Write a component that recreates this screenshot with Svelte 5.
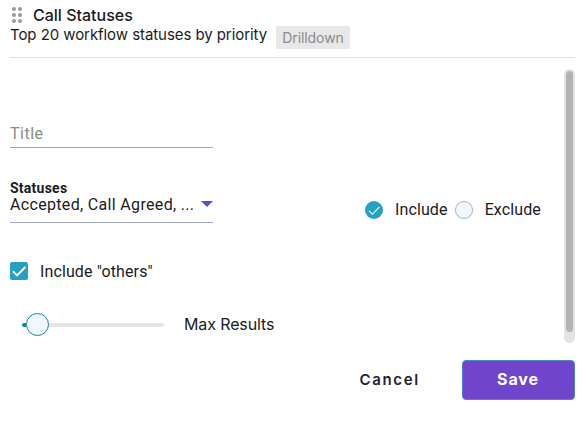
<script lang="ts">
    let title = '';
    let mode = 'include';
    let includeOthers = true;
    let statuses = 'Accepted, Call Agreed, ...';

    const dots = [0, 1, 2, 3, 4, 5];
    const modes = [
        { id: 'include', label: 'Include' },
        { id: 'exclude', label: 'Exclude' }
    ];
</script>

<main>
    <header>
        <div class="heading">
            <div class="drag-handle">
                {#each dots as dot (dot)}
                    <span class="dot"></span>
                {/each}
            </div>
            <div class="caption">Call Statuses</div>
        </div>
        <div class="sub-heading">
            <span class="description">Top 20 workflow statuses by priority</span>
            <span class="tag">Drilldown</span>
        </div>
    </header>

    <div class="content">
        <div class="fields">
            <input class="title" type="text" placeholder="Title" bind:value={title} />

            <div class="status-row">
                <div class="select">
                    <div class="select-label">Statuses</div>
                    <div class="select-value">
                        <span>{statuses}</span>
                        <svg width="12" height="6" viewBox="0 0 12 6"><path d="M0 0h12L6 6z" fill="#6f45cc" /></svg>
                    </div>
                </div>

                <div class="modes">
                    {#each modes as item (item.id)}
                        <button class="mode" on:click={() => (mode = item.id)}>
                            <span class="radio" class:checked={mode === item.id}>
                                {#if mode === item.id}
                                    <svg width="18" height="18" viewBox="0 0 18 18">
                                        <path d="M3.9 9.7l3.5 3.4 7-7.1" fill="none" stroke="#d9f3fb" stroke-width="1.2" />
                                    </svg>
                                {/if}
                            </span>
                            <span class="mode-label">{item.label}</span>
                        </button>
                    {/each}
                </div>
            </div>

            <button class="others" on:click={() => (includeOthers = !includeOthers)}>
                <span class="checkbox" class:checked={includeOthers}>
                    {#if includeOthers}
                        <svg width="18" height="18" viewBox="0 0 18 18">
                            <path d="M3 9.4l4.1 4.1L15.3 5" fill="none" stroke="#ffffff" stroke-width="1.9" />
                        </svg>
                    {/if}
                </span>
                <span>Include "others"</span>
            </button>

            <div class="slider-row">
                <div class="slider">
                    <span class="filled"></span>
                    <span class="thumb"></span>
                    <span class="rail"></span>
                </div>
                <span class="slider-label">Max Results</span>
            </div>
        </div>

        <div class="scrollbar">
            <div class="scroll-thumb"></div>
        </div>
    </div>

    <footer>
        <button class="cancel">Cancel</button>
        <button class="save">Save</button>
    </footer>
</main>

<style>
    :global(body) {
        background: #ffffff;
    }

    main {
        box-sizing: border-box;
        height: 422px;
        padding: 0 8px 0 10px;
        color: #1b1b1f;
        font-family: Roboto, sans-serif;
        font-size: 16px;
        overflow: hidden;
    }

    button {
        padding: 0;
        border: none;
        background: none;
        color: inherit;
        font: inherit;
        letter-spacing: inherit;
    }

    svg {
        display: block;
    }

    header {
        box-sizing: border-box;
        height: 58px;
        padding-top: 5px;
        border-bottom: 1px solid #e2e2e4;
        font-family: Inter, sans-serif;
    }

    .heading {
        display: flex;
        align-items: center;
        height: 20px;
    }

    .drag-handle {
        display: grid;
        grid-template-columns: 4px 4px;
        gap: 2px;
        margin: 0 11px 0 2px;
    }

    .dot {
        width: 4px;
        height: 4px;
        border-radius: 50%;
        background: #9b9b9b;
    }

    .caption {
        font-size: 16px;
        font-weight: 500;
        line-height: 20px;
    }

    .sub-heading {
        display: flex;
        align-items: flex-start;
        font-size: 14px;
    }

    .description {
        font-size: 15px;
        line-height: 20px;
        letter-spacing: -0.07px;
    }

    .tag {
        width: 74px;
        height: 23px;
        margin-top: 1px;
        margin-left: 9px;
        border-radius: 2px;
        background: #e8e8e8;
        color: #8b8b8b;
        line-height: 23px;
        letter-spacing: -0.1px;
        text-align: center;
    }

    .content {
        display: flex;
        justify-content: space-between;
        height: 286px;
    }

    .fields {
        width: 541px;
    }

    .title {
        display: block;
        box-sizing: border-box;
        width: 203px;
        height: 31px;
        margin-top: 59px;
        padding: 2px 0 0;
        border: none;
        border-bottom: 1px solid #a0a5c0;
        font: 16px Roboto, sans-serif;
        letter-spacing: 0.5px;
    }

    .title::placeholder {
        color: #8c8c8c;
    }

    .status-row {
        display: flex;
        align-items: flex-start;
        margin-top: 33px;
    }

    .select {
        box-sizing: border-box;
        width: 203px;
        height: 42px;
        border-bottom: 1px solid #a0a9d0;
    }

    .select-label {
        height: 15px;
        font-size: 14px;
        font-weight: 700;
        line-height: 15px;
        letter-spacing: 0.25px;
    }

    .select-value {
        display: flex;
        align-items: center;
        justify-content: space-between;
        line-height: 18px;
        letter-spacing: 0.33px;
        white-space: nowrap;
    }

    .select-value svg {
        margin-bottom: 2px;
    }

    .modes {
        display: flex;
        gap: 7px;
        margin: 20px 0 0 152px;
    }

    .mode {
        display: flex;
        align-items: center;
        height: 18px;
        line-height: 18px;
    }

    .radio {
        box-sizing: border-box;
        width: 18px;
        height: 18px;
        border: 1px solid #a5b4cc;
        border-radius: 50%;
        background: #f3f9ff;
    }

    .radio.checked {
        border: none;
        background: #26a1c6;
    }

    .mode-label {
        margin-left: 12px;
        padding-bottom: 1px;
        letter-spacing: 0.12px;
    }

    .others {
        display: flex;
        align-items: center;
        gap: 12px;
        height: 18px;
        margin-top: 39px;
        letter-spacing: 0.12px;
    }

    .checkbox {
        box-sizing: border-box;
        width: 18px;
        height: 18px;
        border: 1px solid #a5b4cc;
        border-radius: 2px;
    }

    .checkbox.checked {
        border: none;
        background: #26a1c6;
    }

    .slider-row {
        display: flex;
        align-items: center;
        height: 23px;
        margin-top: 33px;
        font-family: Inter, sans-serif;
        font-size: 16px;
    }

    .slider {
        display: flex;
        align-items: center;
        width: 142px;
        margin-left: 12px;
    }

    .filled {
        width: 4px;
        height: 4px;
        border-radius: 2px 0 0 2px;
        background: #0b87a5;
    }

    .thumb {
        box-sizing: border-box;
        width: 23px;
        height: 23px;
        border: 1px solid #16839c;
        border-radius: 50%;
        background: #f2f7ff;
    }

    .rail {
        flex: 1;
        height: 4px;
        border-radius: 0 2px 2px 0;
        background: #e5e5e5;
    }

    .slider-label {
        margin-left: 20px;
        padding-bottom: 2px;
        letter-spacing: -0.12px;
    }

    .scrollbar {
        box-sizing: border-box;
        width: 11px;
        height: 274px;
        margin-top: 11px;
        padding: 2px;
        border-radius: 6px;
        background: #e4e4e4;
    }

    .scroll-thumb {
        height: 261px;
        border-radius: 4px;
        background: #b3b3b3;
    }

    footer {
        display: flex;
        justify-content: flex-end;
        padding-top: 16px;
        font-family: Inter, sans-serif;
        font-size: 16px;
        font-weight: 600;
        letter-spacing: 1.1px;
    }

    .cancel {
        height: 38px;
        margin-right: 42px;
        color: #1f2430;
        font-size: 15px;
        letter-spacing: 1.7px;
    }

    .save {
        box-sizing: border-box;
        width: 113px;
        height: 40px;
        padding: 0 1px 2px 0;
        border: 1px solid #4a85d6;
        border-radius: 4px;
        background: #6f45cc;
        color: #ffffff;
        font-weight: 700;
        letter-spacing: 0.9px;
    }
</style>
